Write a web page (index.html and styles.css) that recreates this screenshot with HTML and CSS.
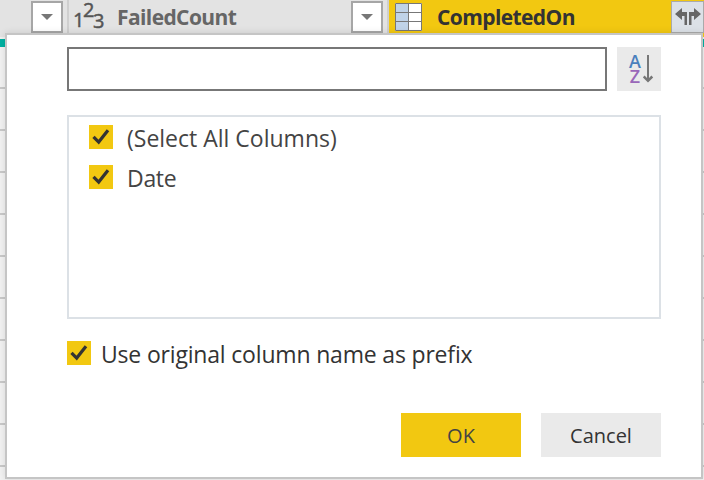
FILE: index.html
```
<!DOCTYPE html>
<html lang="en">
<head>
<meta charset="utf-8">
<title>Expand columns</title>
<link rel="stylesheet" href="styles.css">
</head>
<body>
<div class="grid">
  <header class="headings">
    <div class="heading heading-first"><span class="filter"><svg width="12" height="6" viewBox="0 0 12 6"><path d="M0 0h12L6 6z"/></svg></span></div>
    <div class="heading heading-count">
      <span class="type-number"><span>1</span><span class="raised">2</span><span class="lowered">3</span></span>
      <span class="name name-count">FailedCount</span>
      <span class="filter"><svg width="12" height="6" viewBox="0 0 12 6"><path d="M0 0h12L6 6z"/></svg></span>
    </div>
    <div class="heading heading-active">
      <svg class="table-icon" width="27" height="28" viewBox="0 0 27 28"><path fill="#fff" d="M0 0h27v28H0z"/><path fill="#c0d3e8" d="M1 1h12v26H1z"/><path fill="none" stroke="#777" d="M.5.5h26v27H.5zM13.5 0v28M0 9.5h27M0 18.5h27"/></svg>
      <span class="name name-completed">CompletedOn</span>
      <span class="expand"><svg width="26" height="18" viewBox="0 0 26 18"><path fill="#666" d="M0 6l7-6v4h5v13h-2.500V8H7v4zM26 6l-7-6v4h-5v13h2.500V8H19v4z"/></svg></span>
    </div>
  </header>
  <div class="quality"></div>
  <div class="rows"></div>
</div>
<main class="dialog">
  <div class="search-row">
    <input class="search" type="text" aria-label="Search columns">
    <button class="sort" aria-label="Sort">
      <span class="letters"><span class="a">A</span><span class="z">Z</span></span>
      <svg width="11" height="28" viewBox="0 0 11 28"><path fill="none" stroke="#777" stroke-width="2" d="M5 0v26"/><path fill="none" stroke="#777" stroke-width="2.500" d="M.7 21.500L5 25.800l4.300-4.300"/></svg>
    </button>
  </div>
  <div class="columns">
    <label class="option"><span class="check"><svg width="24" height="24" viewBox="0 0 24 24"><path d="M4.500 11.800l5.200 5.300L19 5.200"/></svg></span><span class="label-all">(Select All Columns)</span></label>
    <label class="option"><span class="check"><svg width="24" height="24" viewBox="0 0 24 24"><path d="M4.500 11.800l5.200 5.300L19 5.200"/></svg></span><span class="label-date">Date</span></label>
  </div>
  <label class="option prefix"><span class="check"><svg width="24" height="24" viewBox="0 0 24 24"><path d="M4.500 11.800l5.200 5.300L19 5.200"/></svg></span><span class="label-prefix">Use original column name as prefix</span></label>
  <div class="actions"><button class="ok"><span>OK</span></button><button class="cancel"><span>Cancel</span></button></div>
</main>
</body>
</html>
```
FILE: styles.css
```
* { box-sizing: border-box; }
body { margin: 0; width: 704px; height: 480px; overflow: hidden; position: relative; font-family: "Open Sans", "Noto Sans", sans-serif; color: #444; }
.grid { height: 480px; display: flex; flex-direction: column; background: #f0f0f0; }
.headings { display: flex; height: 37px; background: #e3e3e3; }
.heading { display: flex; align-items: flex-start; padding-top: 1px; border-right: 2px solid #cfcfcf; }
.heading-first { width: 69px; justify-content: flex-end; padding-right: 4px; }
.heading-count { width: 320px; padding-right: 4px; }
.heading-active { width: 315px; background: #f2c811; border: 0; padding-left: 6px; }
.filter { width: 32px; height: 32px; border: 2px solid #a6a6a6; background: #fff; display: flex; align-items: center; justify-content: center; flex: none; }
.filter svg { fill: #777; }
.heading-count .filter { margin-left: auto; }
.type-number { display: flex; align-items: flex-start; width: 32px; height: 32px; margin-left: 4px; font-size: 20px; line-height: 24px; color: #555; letter-spacing: -1.5px; padding-top: 7px; -webkit-text-stroke: .5px #555; }
.raised { margin-top: -10px; }
.lowered { margin-top: 1px; }
.name { font-weight: 700; font-size: 21px; line-height: 32px; white-space: nowrap; }
.name-count { color: #666; margin-left: 12px; letter-spacing: -.6px; }
.name-completed { color: #333; margin-left: 15px; letter-spacing: -.6px; }
.table-icon { margin-top: 2px; }
.expand { margin-left: auto; width: 33px; height: 32px; border: 1px solid #aaa; background: #dce1e7; display: flex; align-items: center; justify-content: center; }
.quality { margin-top: 2px; height: 8px; background: #01b1a2; }
.rows { flex: 1; background: repeating-linear-gradient(to bottom, #f2f2f2 0 40px, #c9c9c9 40px 42px); }
.dialog { position: absolute; left: 5px; top: 33px; width: 698px; height: 446px; background: #fff; border: 2px solid #c5c5c5; padding: 12px 40px 0 60px; box-shadow: 0 0 7px rgba(0,0,0,.12); }
.search-row { display: flex; justify-content: space-between; }
.search { width: 540px; height: 44px; border: 2px solid #777; background: #fff; outline: 0; }
.sort { width: 44px; height: 44px; border: 0; background: #eaeaea; display: flex; align-items: flex-start; padding: 8px 7px 0 12px; justify-content: space-between; }
.letters { display: flex; flex-direction: column; font: 600 18px/15px "Open Sans", sans-serif; width: 12px; align-items: center; margin-top: -1px; }
.a { color: #4a80bd; } .z { color: #9967b9; }
.columns { margin-top: 24px; height: 204px; border: 2px solid #dce1e6; padding: 8px 20px; }
.option { display: flex; align-items: flex-start; height: 40px; font-size: 23px; line-height: 26px; white-space: nowrap; }
.check { display: block; width: 24px; height: 24px; background: #f2c811; margin-right: 14px; flex: none; }
.check svg { display: block; fill: none; stroke: #333; stroke-width: 3.2; }
.prefix { margin-top: 22px; height: 24px; color: #333; }
.prefix .check { margin-right: 10px; }
.label-date { letter-spacing: -.3px; }
.label-prefix { letter-spacing: -.18px; }
.actions { margin-top: 48px; display: flex; justify-content: flex-end; gap: 20px; }
.ok, .cancel { width: 120px; height: 44px; border: 0; padding: 2px 0 0; font: 20px/30px "Open Sans", sans-serif; color: #333; background: #eaeaea; }
.ok { background: #f2c811; color: #444; }
```
